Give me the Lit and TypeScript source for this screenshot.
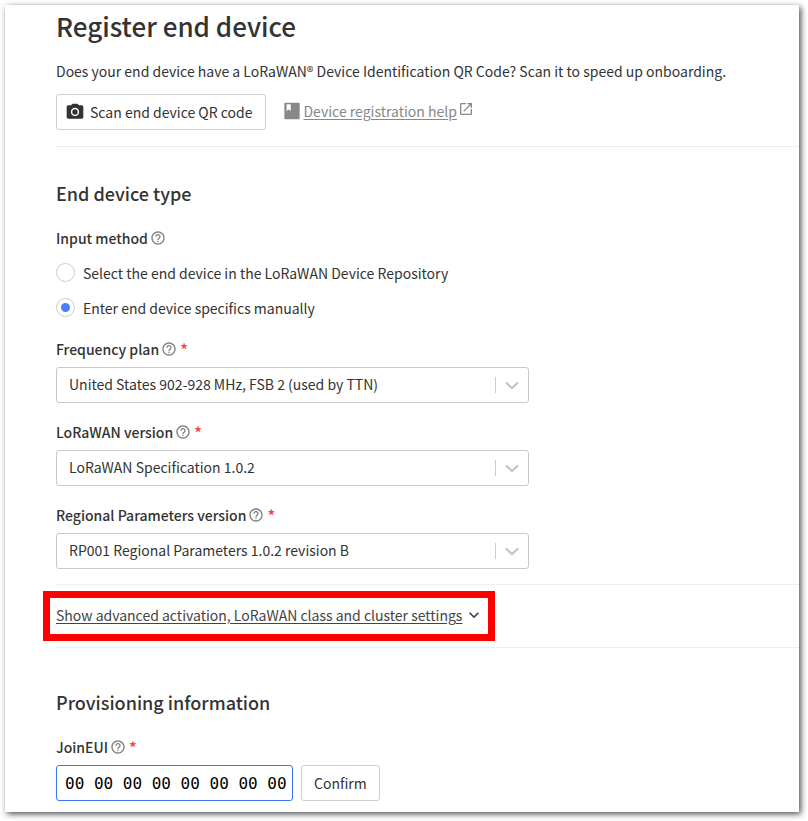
import { LitElement, html, svg, css } from "lit";
import { customElement, property, state } from "lit/decorators.js";

const ICONS: Record<string, string> = {
  camera:
    "M15.2 12a3.2 3.2 0 1 1-6.4 0a3.2 3.2 0 0 1 6.4 0zM9 2L7.17 4H4c-1.1 0-2 .9-2 2v12c0 1.1.9 2 2 2h16c1.1 0 2-.9 2-2V6c0-1.1-.9-2-2-2h-3.17L15 2H9zm3 15c-2.76 0-5-2.24-5-5s2.24-5 5-5 5 2.24 5 5-2.24 5-5 5z",
  book:
    "M20 2H4c-.8 0-1.200.5-1.200 1.200v17.600c0 .7.5 1.200 1.200 1.200h16c.7 0 1.200-.5 1.200-1.200V3.200c0-.7-.5-1.200-1.200-1.200zM5.500 4h5v8l-2.500-1.900L5.500 12V4z",
  launch:
    "M19 19H5V5h7V3H5c-1.11 0-2 .9-2 2v14c0 1.1.89 2 2 2h14c1.1 0 2-.9 2-2v-7h-2v7zM14 3v2h3.59l-9.83 9.83 1.41 1.41L19 6.41V10h2V3h-7z",
  help:
    "M11 18h2v-2h-2v2zm1-16C6.48 2 2 6.48 2 12s4.48 10 10 10 10-4.48 10-10S17.52 2 12 2zm0 18c-4.41 0-8-3.59-8-8s3.59-8 8-8 8 3.59 8 8-3.59 8-8 8zm0-14c-2.21 0-4 1.79-4 4h2c0-1.1.9-2 2-2s2 .9 2 2c0 2-3 1.75-3 5h2c0-2.25 3-2.5 3-5 0-2.21-1.79-4-4-4z",
  chevron: "M7.41 8.59L12 13.17l4.59-4.58L18 10l-6 6-6-6 1.41-1.41z",
};

const icon = (name: string, size = 16) => html`
  <svg class="icon" width=${size} height=${size} viewBox="0 0 24 24" aria-hidden="true">
    ${svg`<path d=${ICONS[name]} fill="currentColor"></path>`}
  </svg>
`;

const shared = css`
  * {
    box-sizing: border-box;
  }
  .icon {
    display: block;
    flex: none;
  }
  .label {
    display: flex;
    align-items: center;
    gap: 2px;
    line-height: 22px;
    font-weight: 500;
  }
  .label .icon {
    color: #808080;
  }
  .required {
    margin-left: 1px;
    color: #ff3b3b;
    font-size: 16px;
  }
`;

@customElement("select-field")
export class SelectField extends LitElement {
  @property() label = "";
  @property({ type: Array }) options: string[] = [];

  static styles = [
    shared,
    css`
      :host {
        display: block;
      }
      .box {
        position: relative;
        max-width: 473px;
        margin-top: 7px;
      }
      .select {
        display: block;
        width: 100%;
        height: 36px;
        padding: 0 48px 2px 12px;
        border: 1px solid #c8c8c8;
        border-radius: 3px;
        background: #ffffff;
        color: #333333;
        font: inherit;
        appearance: none;
      }
      .arrow {
        position: absolute;
        top: 10px;
        right: 7px;
        display: flex;
        align-items: center;
        padding-left: 6px;
        border-left: 1px solid #cccccc;
        color: #c4c4c4;
        pointer-events: none;
      }
      .arrow svg {
        display: block;
      }
    `,
  ];

  render() {
    return html`
      <label class="label" for="select">
        <span>${this.label}</span>${icon("help")}<span class="required">*</span>
      </label>
      <div class="box">
        <select class="select" id="select">
          ${this.options.map((o) => html`<option>${o}</option>`)}
        </select>
        <span class="arrow">
          <svg width="20" height="16" viewBox="0 0 20 16" aria-hidden="true">
            <path d="M4.500 6L10 11L15.500 6" fill="none" stroke="currentColor" stroke-width="2.200" stroke-linecap="round"></path>
          </svg>
        </span>
      </div>
    `;
  }
}

@customElement("app-root")
export class AppRoot extends LitElement {
  @state() private method = "manual";

  static styles = [
    shared,
    css`
      :host {
        display: block;
        padding: 5px 9px 9px 5px;
        background: #ffffff;
        color: #333333;
        font-family: "Noto Sans CJK SC", "Noto Sans", sans-serif;
        font-size: 14px;
      }
      .page {
        padding: 3px 0 11px 51px;
        background: #ffffff;
        box-shadow: 2px 2px 6px rgba(0, 0, 0, 0.7);
      }
      .title {
        margin: 0;
        font-size: 26px;
        line-height: 36px;
        font-weight: 500;
      }
      .intro {
        margin: 15px 0 11px;
        line-height: 24px;
      }
      .row {
        display: flex;
        align-items: center;
      }
      .button {
        display: flex;
        align-items: center;
        gap: 5px;
        height: 36px;
        padding: 0 13px 0 8px;
        border: 1px solid #cfcfcf;
        border-radius: 3px;
        background: #ffffff;
        color: #333333;
        font: inherit;
      }
      .plain {
        padding: 0 12px;
      }
      .help-link {
        display: flex;
        align-items: center;
        gap: 1px;
        margin-left: 16px;
        padding-bottom: 2px;
        color: #888888;
        text-decoration: none;
      }
      .help-text {
        text-decoration: underline;
        text-underline-offset: 2px;
      }
      .help-link .icon:last-child {
        align-self: flex-start;
      }
      .rule {
        height: 1px;
        margin: 0;
        border: 0;
        background: #eeeeee;
      }
      .first {
        margin-top: 16px;
      }
      .heading {
        margin: 0;
        padding: 32px 0 20px;
        font-size: 18px;
        line-height: 28px;
        font-weight: 500;
      }
      .provisioning {
        padding: 40px 0 20px;
      }
      .methods {
        margin: 0;
        padding: 0;
        border: 0;
      }
      .methods .label {
        padding: 0;
      }
      .option {
        display: flex;
        align-items: center;
        gap: 8px;
        height: 35px;
      }
      .options {
        padding: 6px 0 4px;
      }
      .radio {
        display: grid;
        place-items: center;
        width: 19px;
        height: 19px;
        margin: 0;
        border: 1px solid #cccccc;
        border-radius: 50%;
        background: #ffffff;
        appearance: none;
      }
      .radio:checked::before {
        content: "";
        width: 9px;
        height: 9px;
        border-radius: 50%;
        background: #4a80f7;
      }
      .fields {
        display: grid;
        gap: 18px;
        padding: 9px 0 15px;
      }
      .advanced {
        display: flex;
        align-items: center;
        gap: 2px;
        height: 50px;
        margin: 6px 0 6px -13px;
        padding: 0 4px 2px 6px;
        border: 7px solid #ff0000;
        background: #ffffff;
        color: #444444;
        font: inherit;
      }
      .advanced-text {
        text-decoration: underline;
        text-underline-offset: 2px;
      }
      .join {
        gap: 8px;
        margin-top: 7px;
      }
      .eui {
        width: 237px;
        height: 36px;
        padding: 0 4px 0 8px;
        border: 1px solid #3f76f5;
        border-radius: 3px;
        outline: 0;
        background: #ffffff;
        color: #000000;
        font-family: "DejaVu Sans Mono", monospace;
        font-size: 16px;
      }
    `,
  ];

  private option(value: string, text: string) {
    return html`
      <label class="option">
        <input
          class="radio"
          type="radio"
          name="method"
          .checked=${this.method === value}
          @change=${() => (this.method = value)}
        />
        <span>${text}</span>
      </label>
    `;
  }

  render() {
    return html`
      <main class="page">
        <h1 class="title">Register end device</h1>
        <p class="intro">
          Does your end device have a LoRaWAN® Device Identification QR Code? Scan it to speed up onboarding.
        </p>
        <div class="row">
          <button class="button" type="button">${icon("camera", 20)}<span>Scan end device QR code</span></button>
          <a class="help-link" href="#help">
            ${icon("book", 20)}<span class="help-text">Device registration help</span>${icon("launch")}
          </a>
        </div>
        <hr class="rule first" />
        <h2 class="heading">End device type</h2>
        <fieldset class="methods">
          <legend class="label"><span>Input method</span>${icon("help")}</legend>
          <div class="options">
            ${this.option("repository", "Select the end device in the LoRaWAN Device Repository")}
            ${this.option("manual", "Enter end device specifics manually")}
          </div>
        </fieldset>
        <div class="fields">
          <select-field label="Frequency plan" .options=${["United States 902-928 MHz, FSB 2 (used by TTN)"]}></select-field>
          <select-field label="LoRaWAN version" .options=${["LoRaWAN Specification 1.0.2"]}></select-field>
          <select-field label="Regional Parameters version" .options=${["RP001 Regional Parameters 1.0.2 revision B"]}></select-field>
        </div>
        <hr class="rule" />
        <button class="advanced" type="button">
          <span class="advanced-text">Show advanced activation, LoRaWAN class and cluster settings</span>${icon("chevron", 20)}
        </button>
        <hr class="rule" />
        <h2 class="heading provisioning">Provisioning information</h2>
        <label class="label" for="eui">
          <span>JoinEUI</span>${icon("help")}<span class="required">*</span>
        </label>
        <div class="row join">
          <input class="eui" id="eui" type="text" value="00 00 00 00 00 00 00 00" />
          <button class="button plain" type="button">Confirm</button>
        </div>
      </main>
    `;
  }
}
